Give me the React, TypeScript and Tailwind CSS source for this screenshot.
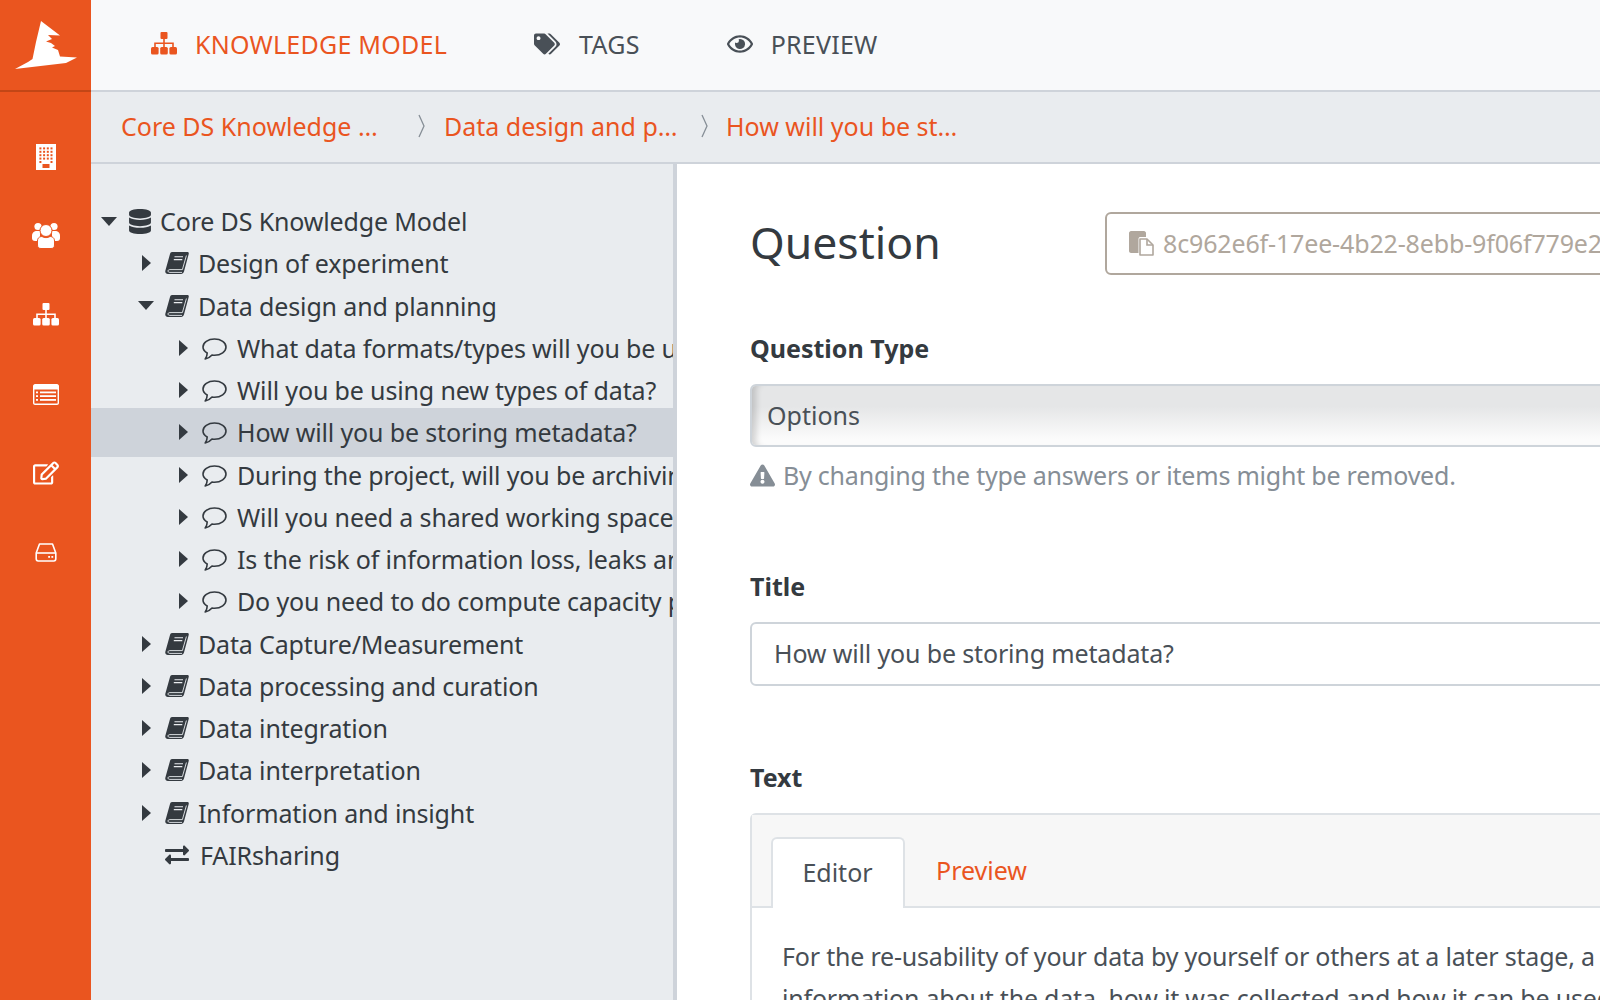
import { FaDatabase, FaExchangeAlt, FaExclamationTriangle, FaRegEdit, FaRegEye, FaTags } from "react-icons/fa";
import type { ReactNode } from "react";

const fontStack = { fontFamily: '"Noto Sans", sans-serif' };

function Logo() {
  return (
    <svg width="91" height="90" viewBox="0 0 91 90" fill="white">
      <path d="M41 21 L60 35.5 L48 35 L52 39 L46 41.5 L51 43 L55 46 L52 47.5 L58 50 L60 56.5 L77 57.5 L66 63 L15 69 L28 62 L32.5 59 L36 42 Z" />
    </svg>
  );
}

function BuildingIcon() {
  const dots = [];
  for (let row = 0; row < 5; row++) {
    for (let col = 0; col < 4; col++) {
      if (row === 4 && (col === 1 || col === 2)) continue;
      dots.push(<rect key={`${row}-${col}`} x={3.4 + col * 3.7} y={3.4 + row * 3.4} width="2" height="2" />);
    }
  }
  return (
    <svg width="20" height="26" viewBox="0 0 20 26">
      <rect width="20" height="26" fill="white" />
      <g fill="#ea551f">
        {dots}
        <rect x="6.5" y="20" width="7" height="4" />
      </g>
    </svg>
  );
}

function UsersIcon() {
  return (
    <svg width="28" height="27" viewBox="0 0 28 27" fill="white">
      <circle cx="6" cy="4.5" r="3.6" />
      <circle cx="22" cy="4.5" r="3.6" />
      <path d="M0 14 C0 10.5 2 9 5 9 H8 V19 H3 C1 19 0 18 0 16 Z" />
      <path d="M28 14 C28 10.5 26 9 23 9 H20 V19 H25 C27 19 28 18 28 16 Z" />
      <circle cx="14" cy="8.5" r="6" stroke="#ea551f" strokeWidth="1" />
      <path d="M5.5 19 C5.5 15.5 8 14.5 10 14.5 C12 16 16 16 18 14.5 C20 14.5 22.5 15.5 22.5 19 V23 C22.5 25.5 21 26.5 19 26.5 H9 C7 26.5 5.5 25.5 5.5 23 Z" stroke="#ea551f" strokeWidth="1" />
    </svg>
  );
}

function SitemapIcon({ className = "" }: { className?: string }) {
  return (
    <svg className={className} width="26" height="23" viewBox="0 0 26 23" fill="currentColor">
      <rect x="9.5" y="0" width="7" height="7" rx="1" />
      <path d="M12.2 7 H13.8 V10.5 H22.8 V15 H21.2 V12 H13.8 V15 H12.2 V12 H4.8 V15 H3.2 V10.5 H12.2 Z" />
      <rect x="0" y="15" width="7.6" height="7.6" rx="1.5" />
      <rect x="9.2" y="15" width="7.6" height="7.6" rx="1.5" />
      <rect x="18.4" y="15" width="7.6" height="7.6" rx="1.5" />
    </svg>
  );
}

function ListIcon() {
  return (
    <svg width="26" height="21" viewBox="0 0 26 21" fill="white">
      <path fillRule="evenodd" d="M2 0 H24 C25 0 26 1 26 2 V19 C26 20 25 21 24 21 H2 C1 21 0 20 0 19 V2 C0 1 1 0 2 0 Z M1.4 5.5 V19 C1.4 19.4 1.6 19.6 2 19.6 H24 C24.4 19.6 24.6 19.4 24.6 19 V5.5 Z" />
      <rect x="3" y="7.5" width="2" height="1.8" />
      <rect x="7" y="7.5" width="16" height="1.8" />
      <rect x="3" y="11.2" width="2" height="1.8" />
      <rect x="7" y="11.2" width="16" height="1.8" />
      <rect x="3" y="15" width="2" height="1.8" />
      <rect x="7" y="15" width="16" height="1.8" />
    </svg>
  );
}

function DriveIcon() {
  return (
    <svg width="22" height="19" viewBox="0 0 22 19" fill="none" stroke="white" strokeWidth="1.6">
      <path d="M4.5 1 H17.5 L20.8 10 V15.8 C20.8 17 20 18 18.8 18 H3.2 C2 18 1.2 17 1.2 15.8 V10 Z" strokeLinejoin="round" />
      <path d="M1.2 10 H20.8" />
      <rect x="13.2" y="13" width="1.8" height="1.8" fill="white" stroke="none" />
      <rect x="16.4" y="13" width="1.8" height="1.8" fill="white" stroke="none" />
    </svg>
  );
}

function BookIcon() {
  return (
    <svg width="24" height="22" viewBox="0 0 24 22" className="shrink-0">
      <path fill="#343a40" d="M7 0 H22.5 C23.6 0 24 1 23.7 2 L19 19.5 C18.5 21 17.5 22 16 22 H3 C1 22 -0.2 20.5 0.4 18.5 L5 2 C5.3 .8 6 0 7 0 Z" />
      <path fill="none" stroke="#e9ecef" strokeWidth="0.9" d="M21.4 3.5 L17.4 17.6 H4.8 C2.4 17.6 2.4 20.4 4.8 20.4 H17" />
      <path fill="none" stroke="#e9ecef" strokeWidth="1.1" d="M9.5 4.8 H18 M8.8 7.6 H17.3" />
    </svg>
  );
}

function CommentIcon() {
  return (
    <svg width="25" height="22" viewBox="0 0 25 22" fill="none" stroke="#343a40" strokeWidth="1.6" className="mt-[2px] shrink-0">
      <path d="M12.5 1 C6 1 1 4.5 1 9 C1 11.5 2.8 13.6 5.2 15 C5.2 17 4.5 19.3 3.2 21 C6.2 20.4 8.5 18.8 10 17 C10.8 17.1 11.6 17.2 12.5 17.2 C19 17.2 24 13.5 24 9 C24 4.5 19 1 12.5 1 Z" strokeLinejoin="round" />
    </svg>
  );
}

function CopyIcon() {
  return (
    <svg width="25" height="25" viewBox="0 0 25 25" className="mr-[9px] shrink-0">
      <path fill="#b0a79d" d="M2 0 H15 C16 0 17 1 17 2 V6 H11 C10 6 9.5 7 9.5 8 V22 H2 C1 22 0 21 0 20 V2 C0 1 1 0 2 0 Z" />
      <path fill="white" stroke="#b0a79d" strokeWidth="1.6" d="M11 8 H18 L24 14 V24 H11 Z" strokeLinejoin="round" />
      <path fill="none" stroke="#b0a79d" strokeWidth="1.6" d="M18 8 V14 H24" />
    </svg>
  );
}

function Chevron() {
  return (
    <svg width="7" height="24" viewBox="0 0 7 24" fill="none" stroke="#868e96" strokeWidth="1.3" className="shrink-0">
      <path d="M1 1 L6 12 L1 23" />
    </svg>
  );
}

function Caret({ open }: { open?: boolean }) {
  return (
    <span className="flex w-[20px] shrink-0 justify-center">
      {open === undefined ? null : open ? (
        <svg width="16" height="9" viewBox="0 0 16 9" fill="#343a40"><path d="M0 0 H16 L8 9 Z" /></svg>
      ) : (
        <svg width="9" height="16" viewBox="0 0 9 16" fill="#343a40"><path d="M0 0 L9 8 L0 16 Z" /></svg>
      )}
    </span>
  );
}

const rail = [<BuildingIcon key="b" />, <UsersIcon key="u" />, <SitemapIcon key="s" className="text-white" />, <ListIcon key="l" />, <FaRegEdit key="e" className="text-[26px] text-white" />, <DriveIcon key="d" />];

function TreeRow({ level, open, icon, label, active, gap }: { level: number; open?: boolean; icon: ReactNode; label: string; active?: boolean; gap?: string }) {
  const pad = level === 0 ? "pl-[8px]" : level === 1 ? "pl-[45px]" : "pl-[82px]";
  const textGap = gap ?? (level === 0 ? "ml-[8px]" : level === 1 ? "ml-[9px]" : "ml-[11px]");
  return (
    <div className={`flex items-center whitespace-nowrap tracking-[-0.15px] ${pad} ${active ? "-my-[3.6px] h-[49.5px] bg-[#ced3da]" : "h-[42.25px]"}`}>
      <Caret open={open} />
      <span className="ml-[9px] flex w-[24px] shrink-0 justify-center">{icon}</span>
      <span className={`${textGap} shrink-0`}>{label}</span>
    </div>
  );
}

const book = <BookIcon />;
const comment = <CommentIcon />;

export default function App() {
  return (
    <div className="flex h-[1000px] w-[1600px] overflow-hidden bg-white text-[25px] leading-[36px] text-[#343a40]" style={fontStack}>
      <aside className="flex w-[91px] shrink-0 flex-col bg-[#ea551f]">
        <div className="h-[92px] border-b-2 border-[#c24616]">
          <Logo />
        </div>
        <div className="flex flex-col items-center pt-[25px]">
          {rail.map((icon, i) => (
            <div key={i} className="flex h-[79.2px] items-center justify-center">{icon}</div>
          ))}
        </div>
      </aside>
      <div className="flex min-w-0 flex-1 flex-col">
        <nav className="flex h-[92px] items-center border-b-2 border-[#ced3da] bg-[#f8f9fa] pb-[3px] pl-[60px] tracking-[0.25px]">
          <span className="flex items-center text-[#ea551f]"><SitemapIcon className="mr-[18px] shrink-0" />KNOWLEDGE MODEL</span>
          <span className="ml-[87px] flex items-center text-[#495057]"><FaTags className="mr-[19px] text-[26px]" />TAGS</span>
          <span className="ml-[87px] flex items-center text-[#495057]"><FaRegEye className="mr-[18px] text-[26px]" />PREVIEW</span>
        </nav>
        <div className="flex h-[72px] items-center whitespace-nowrap border-b-2 border-[#ced3da] bg-[#e9ecef] pb-[2px] pl-[30px] text-[#ea551f]">
          <span className="w-[297px] shrink-0">Core DS Knowledge …</span>
          <Chevron />
          <span className="w-[276px] shrink-0 pl-[19px]">Data design and p…</span>
          <Chevron />
          <span className="shrink-0 pl-[18px]">How will you be st…</span>
        </div>
        <div className="flex min-h-0 flex-1">
          <div className="w-[586px] shrink-0 overflow-hidden border-r-4 border-[#ced3da] bg-[#e9ecef] pt-[36px]">
            <TreeRow level={0} open icon={<FaDatabase className="text-[25px] text-[#343a40]" />} label="Core DS Knowledge Model" />
            <TreeRow level={1} open={false} icon={book} label="Design of experiment" />
            <TreeRow level={1} open icon={book} label="Data design and planning" />
            <TreeRow level={2} open={false} icon={comment} label="What data formats/types will you be using?" />
            <TreeRow level={2} open={false} icon={comment} label="Will you be using new types of data?" />
            <TreeRow level={2} open={false} icon={comment} label="How will you be storing metadata?" active />
            <TreeRow level={2} open={false} icon={comment} label="During the project, will you be archiving?" />
            <TreeRow level={2} open={false} icon={comment} label="Will you need a shared working space" />
            <TreeRow level={2} open={false} icon={comment} label="Is the risk of information loss, leaks and vandalism?" />
            <TreeRow level={2} open={false} icon={comment} label="Do you need to do compute capacity planning?" />
            <TreeRow level={1} open={false} icon={book} label="Data Capture/Measurement" />
            <TreeRow level={1} open={false} icon={book} label="Data processing and curation" />
            <TreeRow level={1} open={false} icon={book} label="Data integration" />
            <TreeRow level={1} open={false} icon={book} label="Data interpretation" />
            <TreeRow level={1} open={false} icon={book} label="Information and insight" />
            <TreeRow level={1} gap="ml-[11px]" icon={<FaExchangeAlt className="text-[26px] text-[#343a40]" />} label="FAIRsharing" />
          </div>
          <main className="min-w-0 flex-1 overflow-hidden pl-[73px] pt-[47px]">
            <div className="flex h-[64px] items-center">
              <h1 className="w-[355px] shrink-0 pb-[2px] text-[44.5px] leading-none text-[#343a40]">Question</h1>
              <div className="flex h-[63px] w-[600px] shrink-0 items-center whitespace-nowrap rounded-[6px] border-2 border-[#b0a79d] pl-[22px] tracking-[-0.15px] text-[#b0a79d]">
                <CopyIcon />8c962e6f-17ee-4b22-8ebb-9f06f779e2
              </div>
            </div>
            <div className="mt-[55px] font-bold">Question Type</div>
            <div className="mt-[18px] flex h-[63px] w-[900px] items-center rounded-[6px] border-2 border-[#ced4da] bg-[linear-gradient(#e5e6e7_35%,#fbfbfb_90%)] pb-[2px] pl-[15px] text-[#495057] shadow-[inset_9px_0_6px_-5px_rgba(0,0,0,0.16)]">Options</div>
            <div className="mt-[10px] flex items-center whitespace-nowrap tracking-[-0.22px] text-[#868e96]"><FaExclamationTriangle className="mr-[8px] text-[25px]" />By changing the type answers or items might be removed.</div>
            <div className="mt-[75px] font-bold">Title</div>
            <div className="mt-[18px] flex h-[64px] w-[900px] items-center rounded-[6px] border-2 border-[#ced4da] pb-[2px] pl-[22px] tracking-[-0.15px] text-[#495057]">How will you be storing metadata?</div>
            <div className="mt-[73px] font-bold">Text</div>
            <div className="mt-[18px] w-[900px] rounded-t-[6px] border-2 border-[#dee2e6]">
              <div className="flex h-[93px] items-end border-b-2 border-[#dee2e6] bg-[#f7f7f7] pl-[19px]">
                <div className="-mb-[2px] flex h-[71px] w-[134px] items-center justify-center rounded-t-[6px] border-2 border-b-0 border-[#dee2e6] bg-white pb-[4px] pr-[1px] text-[#495057]">Editor</div>
                <div className="flex h-[70px] items-center pb-[2px] pl-[31px] text-[#ea551f]">Preview</div>
              </div>
              <div className="whitespace-nowrap px-[30px] pt-[27px] leading-[42px] tracking-[-0.2px] text-[#495057]">
                <p>For the re-usability of your data by yourself or others at a later stage, a</p>
                <p>information about the data, how it was collected and how it can be used</p>
              </div>
            </div>
          </main>
        </div>
      </div>
    </div>
  );
}
